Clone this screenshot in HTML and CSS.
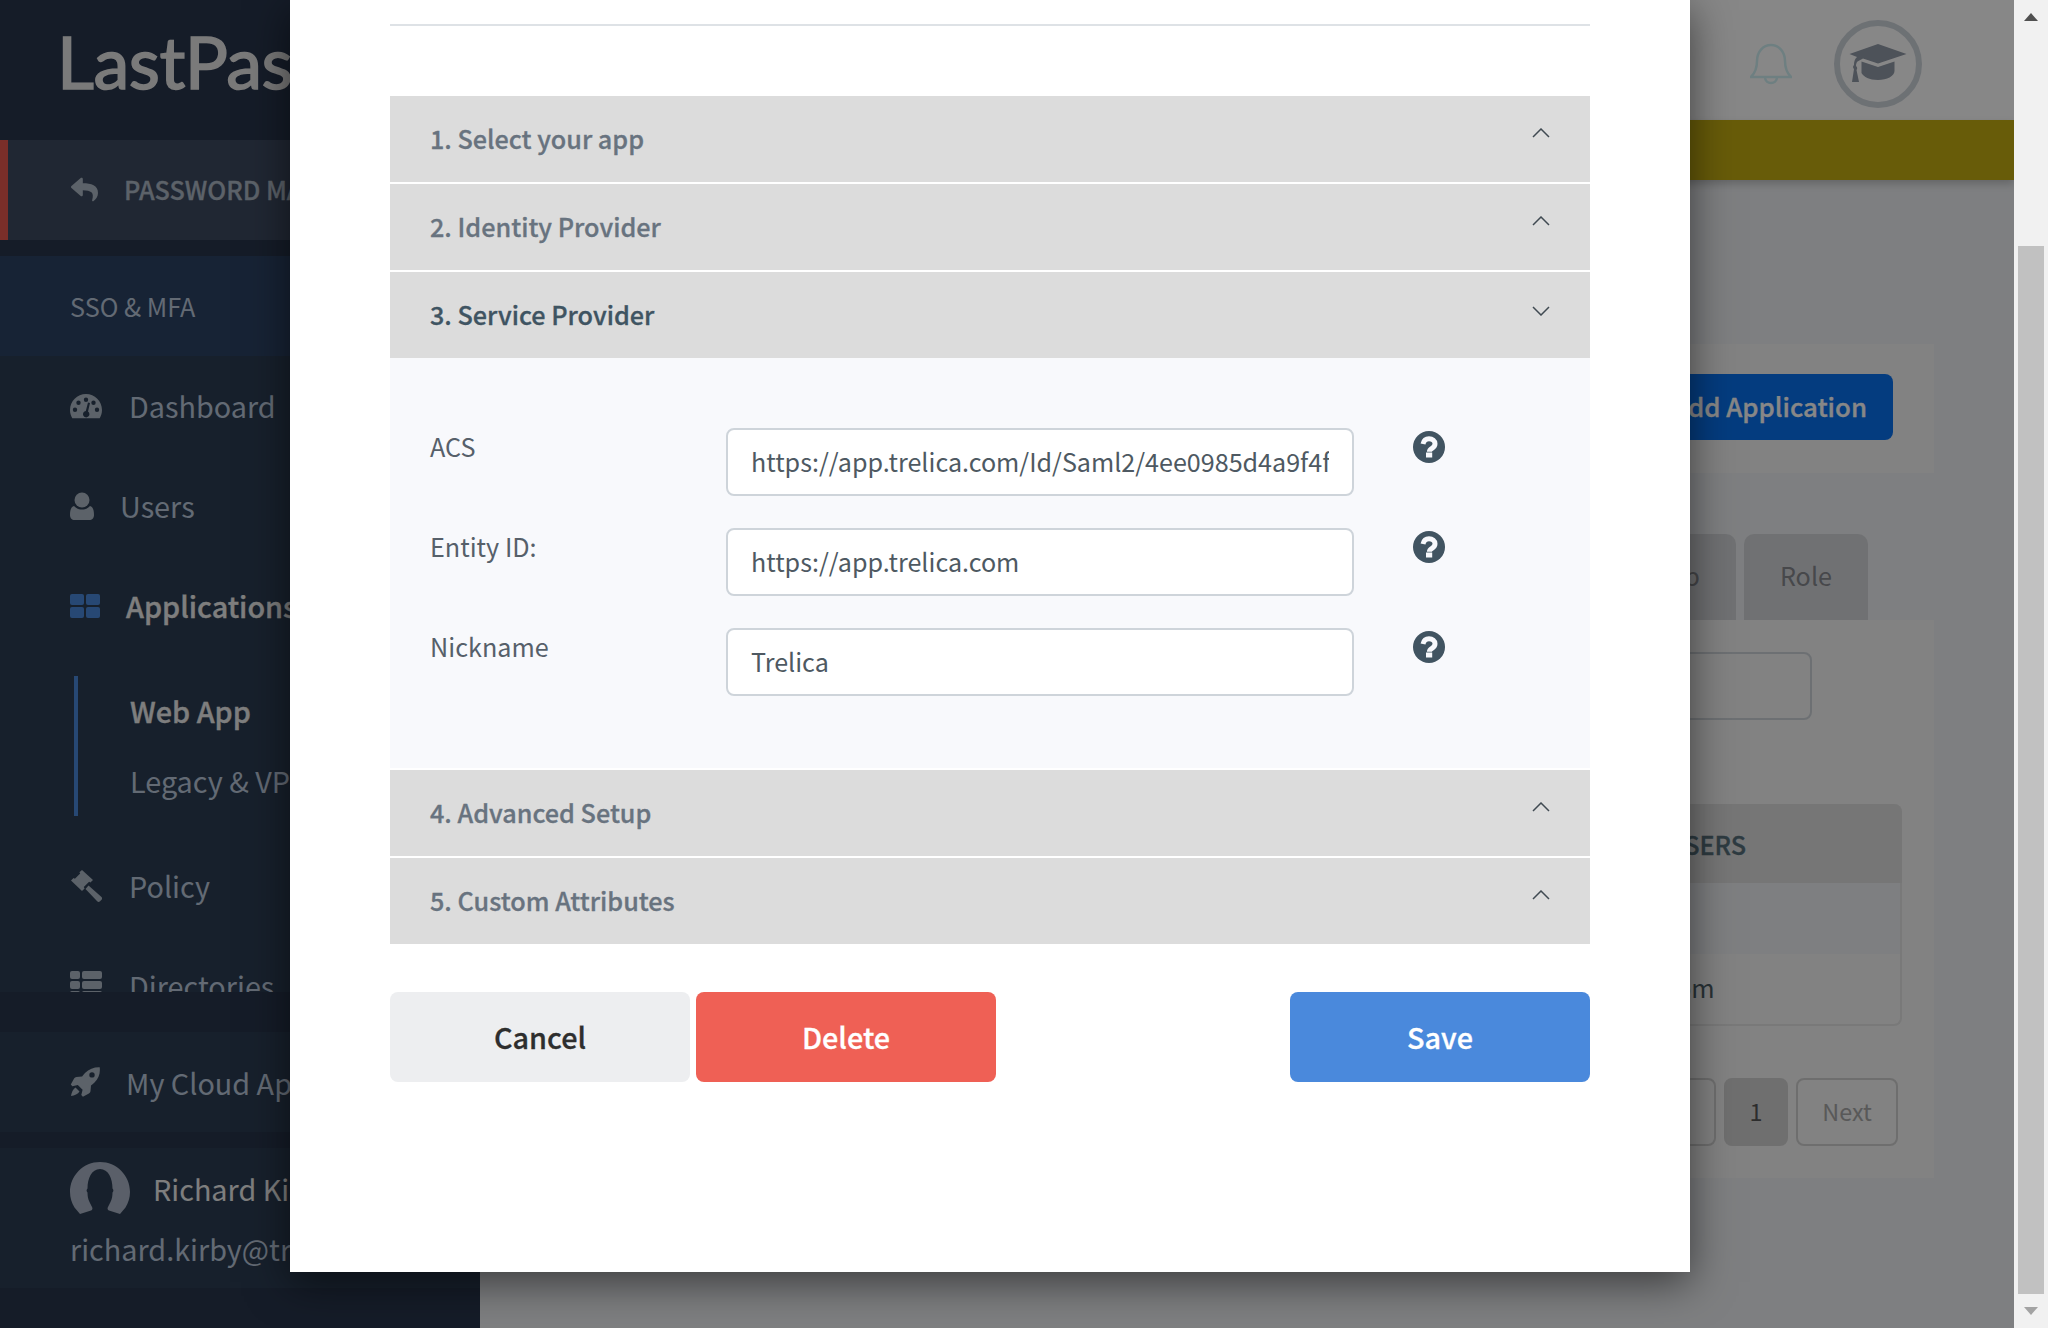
FILE: index.html
```html
<!DOCTYPE html>
<html lang="en">
<head>
<meta charset="utf-8">
<title>Applications</title>
<link rel="stylesheet" href="styles.css">
</head>
<body>
<div class="window">
  <div class="page">
    <aside class="sidebar">
      <div class="logo">LastPass</div>
      <div class="switch">
        <svg class="i-reply" viewBox="0 0 512 512"><path d="M8.3 189.8L184.3 37.9C199.7 24.5 224 35.3 224 56v80.1c160.6 1.8 288 34 288 186.2 0 61.4-39.6 122.3-83.3 154.1-13.7 9.9-33.1-2.5-28.1-18.6 45.3-145-21.5-183.5-176.6-185.7V360c0 20.7-24.3 31.5-39.7 18.2l-176-152c-11.1-9.6-11.1-26.8 0-36.4z"/></svg>
        <span>PASSWORD MANAGER</span>
      </div>
      <div class="section-title">SSO &amp; MFA</div>
      <nav class="nav">
        <div class="nav-item nav-dash">
          <svg class="i-dash" viewBox="0 0 32 26"><path fill-rule="evenodd" d="M16 1C7.2 1 0 8.2 0 17c0 3 .8 5.800 2.300 8.200h27.400C31.200 22.800 32 20 32 17 32 8.200 24.800 1 16 1zM16 4.500a2.200 2.200 0 1 1 0 4.400 2.200 2.200 0 0 1 0-4.400zM8.500 7.500a2.200 2.200 0 1 1 0 4.400 2.200 2.200 0 0 1 0-4.400zM23.500 7.500a2.200 2.200 0 1 1 0 4.400 2.200 2.200 0 0 1 0-4.400zM5 14.500a2.200 2.200 0 1 1 0 4.400 2.200 2.200 0 0 1 0-4.400zM27 14.500a2.200 2.200 0 1 1 0 4.400 2.200 2.200 0 0 1 0-4.400zM20 10l-2 8.500a3.200 3.200 0 1 1-2.200-.5l2.200-8.500z"/></svg>
          <span>Dashboard</span>
        </div>
        <div class="nav-item nav-users">
          <svg class="i-user" viewBox="0 0 24 28"><circle cx="12" cy="8" r="7.500"/><path d="M4 14c2 2.500 5 3.500 8 3.500s6-1 8-3.500c2.600.8 4 3.500 4 9 0 3-2 5-4.500 5h-15C2 28 0 26 0 23c0-5.500 1.400-8.200 4-9z"/></svg>
          <span>Users</span>
        </div>
        <div class="nav-item nav-apps">
          <span class="i-apps"><i></i><i></i><i></i><i></i></span>
          <span>Applications</span>
        </div>
        <div class="subnav">
          <div class="sub-item sub-active">Web App</div>
          <div class="sub-item">Legacy &amp; VPN</div>
        </div>
        <div class="nav-item nav-policy">
          <svg class="i-gavel" viewBox="0 0 32 32"><path d="M12 0l11 10-2.600 2.600-1.300-.8-5.300 5.300.8 1.300L12 21 1 10.500 3.600 8l1.300.8 5.300-5.300-.8-1.300zM18.500 15.500l13 11.500c.8.800.8 2 0 2.800l-1.500 1.500c-.8.800-2 .8-2.800 0L15.500 19z"/></svg>
          <span>Policy</span>
        </div>
        <div class="nav-item nav-dirs">
          <svg class="i-list" viewBox="0 0 32 26"><rect width="10" height="8" rx="2"/><rect x="12" width="20" height="8" rx="2"/><rect y="10" width="10" height="8" rx="2"/><rect x="12" y="10" width="20" height="8" rx="2"/><rect y="20" width="10" height="6" rx="2"/><rect x="12" y="20" width="20" height="6" rx="2"/></svg>
          <span>Directories</span>
        </div>
      </nav>
      <div class="cloud">
        <svg class="i-rocket" viewBox="0 0 30 30"><path fill-rule="evenodd" d="M29.700.300c.8 5.800-1 11-5.200 15.200-1 1-2.200 2-3.500 2.900l-.5 5.600c-.1 1-.7 1.900-1.600 2.400l-6 3.300-1.600-1.600 1.300-5.400-4.800-4.800-5.400 1.300L.800 17.600l3.300-6c.5-.9 1.400-1.500 2.400-1.600l5.600-.5c.9-1.300 1.900-2.500 2.900-3.500C19 2.100 24.200.1 29.700.300zM22 5.200a2.700 2.700 0 1 0 0 5.400 2.700 2.700 0 0 0 0-5.400z"/><path d="M5.500 20.500l4 4C8 27 4.500 28.500 1 29c.5-3.500 2-7 4.500-8.500z"/></svg>
        <span>My Cloud Apps</span>
      </div>
      <div class="account">
        <div class="account-top">
          <svg class="avatar" viewBox="0 0 60 54"><path d="M30 0C13.400 0 0 13.400 0 30c0 6 1.800 11 4.500 15.500L10 52l11-3.500c1.500-.6 1.800-2 1-3.500l-2.500-5c-1.500-3-2-6-2-9.500-1.200-1-1.200-3 0-4 0-10 4-19.500 12.500-19.500S42.500 16.500 42.500 26.500c1.200 1 1.200 3 0 4 0 3.500-.5 6.500-2 9.500L38 45c-.8 1.500-.5 2.900 1 3.500L50 52l5.500-6.500C58.200 41 60 36 60 30 60 13.400 46.600 0 30 0z"/></svg>
          <span>Richard Kirby</span>
        </div>
        <div class="email">richard.kirby@trelica.com</div>
      </div>
    </aside>

    <main class="main">
      <header class="topbar">
        <svg class="i-bell" viewBox="0 0 42 42"><path d="M1 34c4-4 6-8 6-16 0-9 6-16 14-16s14 7 14 16c0 8 2 12 6 16zM15 34c0 4 3 6 6 6s6-2 6-6"/></svg>
        <span class="learn">
          <svg class="i-cap" viewBox="0 0 58 40"><path d="M29 0l28.500 10-28.500 9.500-15-5-5.500 3c-1 1-1.500 2.500-1.500 4.500 1.500 1 1.500 3 .5 4L10 38H3l2-13c-1.300-1-1.300-3 0-4 0-3 .5-6 3-8L.5 10z"/><path d="M12.500 17.500L29 23l16.500-5.500V27c0 5-7.500 9-16.500 9S15 33 12.500 29z"/></svg>
        </span>
      </header>
      <div class="banner"></div>
      <section class="panel panel-actions">
        <button class="btn-add">Add Application</button>
      </section>
      <div class="tabs">
        <div class="tab">Group</div>
        <div class="tab">Role</div>
      </div>
      <section class="panel panel-list">
        <div class="search"></div>
        <div class="table">
          <div class="thead">USERS</div>
          <div class="trow trow-alt"></div>
          <div class="trow">admin@trelica.com</div>
        </div>
        <div class="pager">
          <span class="page-btn page-prev">Previous</span>
          <span class="page-btn page-cur">1</span>
          <span class="page-btn page-next">Next</span>
        </div>
      </section>
    </main>

    <div class="overlay"></div>

    <div class="modal">
      <hr class="rule">
      <div class="accordion">
        <div class="acc-head">
          <span>1. Select your app</span>
          <svg class="chev" viewBox="0 0 18 10"><path d="M1 9l8-8 8 8"/></svg>
        </div>
        <div class="acc-head">
          <span>2. Identity Provider</span>
          <svg class="chev" viewBox="0 0 18 10"><path d="M1 9l8-8 8 8"/></svg>
        </div>
        <div class="acc-head acc-open">
          <span>3. Service Provider</span>
          <svg class="chev" viewBox="0 0 18 10"><path d="M1 1l8 8 8-8"/></svg>
        </div>
        <div class="acc-body">
          <div class="field">
            <label class="field-label">ACS</label>
            <input class="field-input" value="https://app.trelica.com/Id/Saml2/4ee0985d4a9f4f0b8e6a">
            <svg class="help" viewBox="0 0 32 32"><circle cx="16" cy="16" r="16"/><path class="help-q" d="M10 13c.8-3.400 3-5.200 6-5.200 3.400 0 6 2 6 5 0 2.500-1.400 3.600-3 4.600-1.600 1-2.600 1.600-2.600 3.400"/><rect class="help-dot" x="13" y="21.500" width="6.200" height="5"/></svg>
          </div>
          <div class="field">
            <label class="field-label">Entity ID:</label>
            <input class="field-input" value="https://app.trelica.com">
            <svg class="help" viewBox="0 0 32 32"><circle cx="16" cy="16" r="16"/><path class="help-q" d="M10 13c.8-3.400 3-5.200 6-5.200 3.400 0 6 2 6 5 0 2.500-1.400 3.600-3 4.600-1.600 1-2.600 1.600-2.600 3.400"/><rect class="help-dot" x="13" y="21.500" width="6.200" height="5"/></svg>
          </div>
          <div class="field">
            <label class="field-label">Nickname</label>
            <input class="field-input" value="Trelica">
            <svg class="help" viewBox="0 0 32 32"><circle cx="16" cy="16" r="16"/><path class="help-q" d="M10 13c.8-3.400 3-5.200 6-5.200 3.400 0 6 2 6 5 0 2.500-1.400 3.600-3 4.600-1.600 1-2.600 1.600-2.600 3.400"/><rect class="help-dot" x="13" y="21.500" width="6.200" height="5"/></svg>
          </div>
        </div>
        <div class="acc-head">
          <span>4. Advanced Setup</span>
          <svg class="chev" viewBox="0 0 18 10"><path d="M1 9l8-8 8 8"/></svg>
        </div>
        <div class="acc-head">
          <span>5. Custom Attributes</span>
          <svg class="chev" viewBox="0 0 18 10"><path d="M1 9l8-8 8 8"/></svg>
        </div>
      </div>
      <div class="actions">
        <button class="btn btn-cancel">Cancel</button>
        <button class="btn btn-delete">Delete</button>
        <button class="btn btn-save">Save</button>
      </div>
    </div>
  </div>

  <div class="scrollbar">
    <div class="arrow arrow-up"></div>
    <div class="track"><div class="thumb"></div></div>
    <div class="arrow arrow-down"></div>
  </div>
</div>
</body>
</html>
```
FILE: styles.css
```css
* { box-sizing: border-box; }
html, body { margin: 0; height: 100%; overflow: hidden; }
body {
  font-family: "Noto Sans CJK JP", "Noto Sans", sans-serif;
  font-size: 25.2px;
  color: #404a52;
}
.window { display: flex; width: 2048px; height: 1328px; overflow: hidden; }
.page { position: relative; display: flex; width: 2014px; height: 1328px; overflow: hidden; }

/* Sidebar */
.sidebar {
  flex: 0 0 480px;
  display: flex;
  flex-direction: column;
  background: #28354d;
  color: #bbc8db;
}
.logo {
  height: 140px;
  padding: 16px 0 0 57px;
  font-family: "Lato", sans-serif;
  font-size: 72px;
  line-height: 90px;
  letter-spacing: -.5px;
  font-weight: 400;
  -webkit-text-stroke: 1.500px currentColor;
  color: #e6e6e6;
  white-space: nowrap;
}
.switch {
  height: 100px;
  display: flex;
  align-items: center;
  gap: 25px;
  padding: 0 0 2px 62px;
  border-left: 8px solid #e6574f;
  background: #3e4b60;
  font-weight: 500;
  -webkit-text-stroke: .3px currentColor;
  color: #aeb9c6;
  white-space: nowrap;
}
.i-reply { width: 29px; height: 27px; fill: #aeb9c6; }
.section-title {
  height: 100px;
  margin-top: 16px;
  padding: 0 0 1px 70px;
  display: flex;
  align-items: center;
  background: #2d4264;
}
.nav {
  height: 636px;
  overflow: hidden;
  background: #2d3e53;
  padding-left: 70px;
  font-size: 28.8px;
}
.nav-item { display: flex; align-items: center; height: 100px; padding-bottom: 1px; white-space: nowrap; }
.nav-dash { gap: 27px; }
.nav-users { gap: 26px; }
.nav-apps { gap: 26px; font-weight: 500; -webkit-text-stroke: .3px currentColor; color: #efefef; }
.nav-policy { gap: 27px; margin-top: 20px; }
.nav-dirs { gap: 27px; margin-top: 0; }
.i-dash { width: 32px; height: 26px; fill: #aeb9c6; }
.i-user { width: 24px; height: 28px; fill: #aeb9c6; }
.i-apps { display: grid; grid-template-columns: 14px 14px; grid-auto-rows: 11px; gap: 2px; }
.i-apps i { background: #4a89dc; border-radius: 2px; }
.i-gavel { width: 32px; height: 32px; fill: #aeb9c6; }
.i-list { width: 32px; height: 26px; fill: #aeb9c6; margin-top: -4px; }
.subnav {
  margin: 20px 0 0 4px;
  padding-left: 52px;
  border-left: 4px solid #4a89dc;
  height: 140px;
  white-space: nowrap;
}
.sub-item { height: 70px; line-height: 69px; }
.sub-active { font-weight: 500; -webkit-text-stroke: .3px currentColor; color: #efefef; }
.cloud {
  height: 100px;
  margin-top: 40px;
  display: flex;
  align-items: center;
  gap: 26px;
  padding-left: 70px;
  background: #2d3e53;
  font-size: 28.8px;
  white-space: nowrap;
}
.i-rocket { width: 30px; height: 30px; fill: #aeb9c6; }
.account {
  height: 140px;
  margin-top: 16px;
  padding: 14px 0 0 70px;
  background: #2d3e53;
  font-size: 28.8px;
  white-space: nowrap;
}
.account-top { display: flex; align-items: flex-start; gap: 23px; height: 54px; color: #efefef; }
.account-top span { line-height: 54px; }
.avatar { width: 60px; height: 54px; fill: #aab4c6; }
.email { margin-top: 6px; line-height: 54px; }

/* Main */
.main {
  flex: 1;
  display: flex;
  flex-direction: column;
  background: #eef0f3;
}
.topbar {
  height: 120px;
  flex: none;
  background: #fff;
  display: flex;
  justify-content: flex-end;
  align-items: flex-start;
  padding: 20px 92px 0 0;
  gap: 42px;
}
.i-bell {
  width: 42px;
  height: 42px;
  margin-top: 23px;
  fill: none;
  stroke: #d0f0f4;
  stroke-width: 2.500;
}
.learn {
  width: 88px;
  height: 88px;
  border-radius: 50%;
  border: 6px solid #cfd5dc;
  display: flex;
  align-items: center;
  justify-content: center;
}
.i-cap { width: 58px; height: 40px; fill: #929ba8; }
.banner {
  height: 60px;
  flex: none;
  background: #c4af11;
  box-shadow: 0 4px 8px rgba(0,0,0,.2);
}
.panel { margin: 0 80px 0 40px; background: #f5f5f5; }
.panel-actions {
  margin-top: 164px;
  height: 129px;
  display: flex;
  justify-content: flex-end;
  padding: 30px 41px 0 0;
}
.btn-add {
  height: 66px;
  padding: 0 26px 3px;
  border: 0;
  border-radius: 8px;
  background: #0971f0;
  color: #fff;
  font: inherit;
  font-size: 25.8px;
  font-weight: 500;
  -webkit-text-stroke: .3px currentColor;
}
.tabs {
  display: flex;
  justify-content: flex-end;
  gap: 8px;
  margin: 61px 146px 0 0;
  height: 86px;
  flex: none;
}
.tab {
  padding: 0 36px;
  border-radius: 10px 10px 0 0;
  background: #d4d6da;
  color: #87898f;
  text-align: center;
  line-height: 83px;
}
.panel-list {
  height: 558px;
  padding: 32px 32px 0 0;
  display: flex;
  flex-direction: column;
  align-items: flex-end;
}
.search {
  width: 700px;
  height: 68px;
  margin-right: 90px;
  border: 2px solid #ced4da;
  border-radius: 8px;
}
.table {
  width: 1100px;
  height: 222px;
  margin-top: 84px;
  border: 2px solid #e4e4e4;
  border-top: 0;
  border-radius: 8px;
}
.thead {
  height: 79px;
  margin: 0 -2px;
  padding-left: 864px;
  background: #dfdfdf;
  border-radius: 8px 8px 0 0;
  font-weight: 500;
  -webkit-text-stroke: .3px currentColor;
  line-height: 80px;
  color: #57707c;
}
.trow { height: 71px; padding-left: 680px; line-height: 67px; color: #4f6069; white-space: nowrap; }
.trow-alt { background: #eef0f3; }
.pager {
  display: flex;
  gap: 8px;
  margin: 52px 4px 0 0;
  font-size: 23.4px;
}
.page-btn {
  height: 68px;
  padding-bottom: 2px;
  border: 2px solid #d0d0d0;
  border-radius: 8px;
  display: flex;
  align-items: center;
  justify-content: center;
  color: #a8a8a8;
}
.page-prev { width: 200px; }
.page-cur { width: 64px; background: #d2d2d2; border-color: #d2d2d2; color: #555; }
.page-next { width: 102px; }

/* Overlay and modal */
.overlay { position: absolute; inset: 0; background: rgba(0,0,0,.47); }
.modal {
  position: absolute;
  left: 290px;
  top: 0;
  width: 1400px;
  height: 1272px;
  padding: 24px 100px 0;
  background: #fff;
  box-shadow: 0 10px 40px rgba(0,0,0,.55);
}
.rule { margin: 0; height: 2px; border: 0; background: #dee2e6; }
.accordion { margin-top: 70px; display: flex; flex-direction: column; gap: 2px; }
.acc-head {
  height: 86px;
  display: flex;
  align-items: center;
  justify-content: space-between;
  padding: 0 40px;
  background: #dcdcdc;
  color: #68737f;
  font-weight: 500;
}
.acc-head span { padding-bottom: 2px; -webkit-text-stroke: .3px currentColor; }
.acc-open { color: #3f5462; }
.chev {
  width: 18px;
  height: 10px;
  margin: 0 0 12px;
  fill: none;
  stroke: #404a52;
  stroke-width: 1.500;
}
.acc-open .chev { margin: 0 0 8px; }
.acc-body {
  height: 410px;
  margin-top: -2px;
  padding-top: 70px;
  background: #f8f9fc;
  display: flex;
  flex-direction: column;
  gap: 32px;
}
.field { display: flex; align-items: flex-start; padding-left: 40px; }
.field-label { width: 296px; line-height: 36px; color: #56606a; }
.field-input {
  width: 628px;
  height: 68px;
  padding: 0 23px 2px;
  border: 2px solid #ced4da;
  border-radius: 8px;
  background: #fff;
  color: #4e5962;
  font: inherit;
  font-size: 25.1px;
}
.help { width: 32px; height: 32px; margin: 3px 0 0 59px; fill: #415461; }
.help-q { fill: none; stroke: #f8f9fc; stroke-width: 5; }
.help-dot { fill: #f8f9fc; }
.actions { display: flex; gap: 6px; margin-top: 48px; }
.btn {
  width: 300px;
  height: 90px;
  padding: 0 0 2px;
  border: 0;
  border-radius: 8px;
  font: inherit;
  font-size: 28.8px;
  font-weight: 500;
  -webkit-text-stroke: .3px currentColor;
}
.btn-cancel { background: #edeef0; color: #2e2e2e; }
.btn-delete { background: #ef6055; color: #fff; }
.btn-save { margin-left: auto; background: #4a89dc; color: #fff; }

/* Scrollbar */
.scrollbar {
  flex: 0 0 34px;
  display: flex;
  flex-direction: column;
  background: #f1f1f1;
}
.track { flex: 1; padding: 212px 4px 0; }
.thumb { height: 1048px; background: #c1c1c1; }
.arrow { flex: none; height: 34px; position: relative; }
.arrow::after {
  content: "";
  position: absolute;
  left: 10px;
  border-left: 7px solid transparent;
  border-right: 7px solid transparent;
}
.arrow-up::after { top: 13px; border-bottom: 8px solid #505050; }
.arrow-down::after { top: 13px; border-top: 8px solid #a3a3a3; }
```
